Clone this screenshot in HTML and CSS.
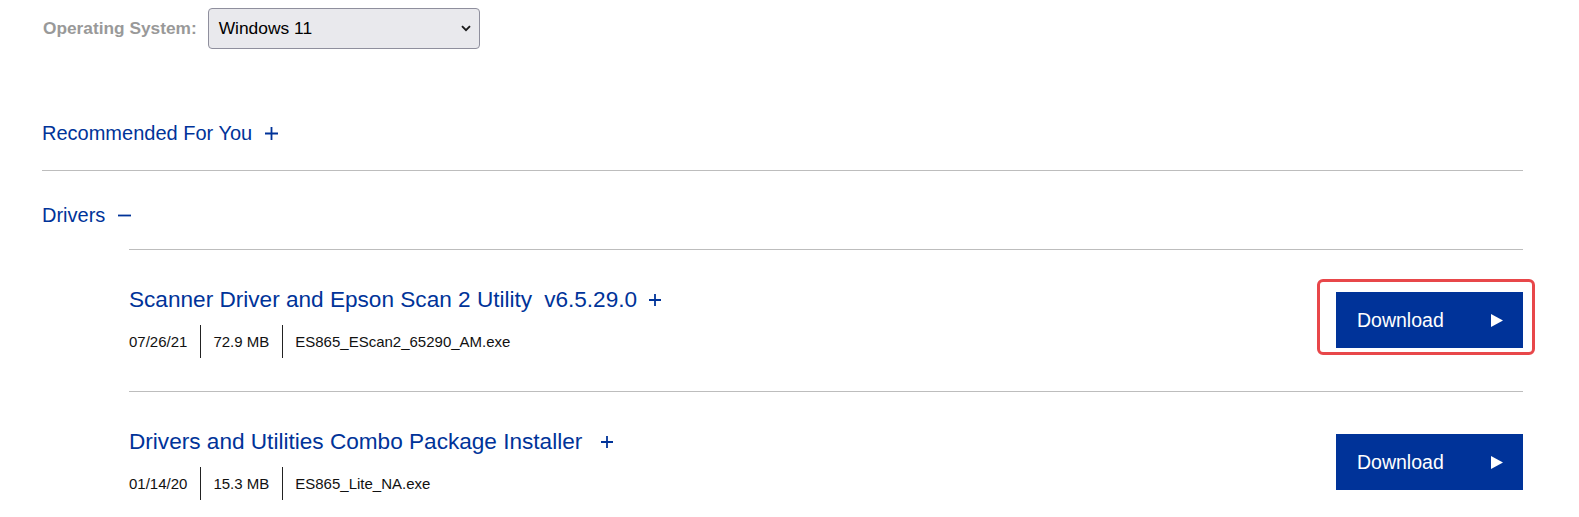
FILE: index.html
```html
<!DOCTYPE html>
<html lang="en">
<head>
<meta charset="utf-8">
<title>Drivers</title>
<link rel="stylesheet" href="styles.css">
</head>
<body>
<div class="page">
  <div class="os-row">
    <span class="os-label">Operating System:</span>
    <div class="select">
      <span>Windows 11</span>
      <svg class="chev" width="10" height="7" viewBox="0 0 10 7"><path d="M1 1.2 L5 5.2 L9 1.2" fill="none" stroke="#1a1a1a" stroke-width="1.9"/></svg>
    </div>
  </div>

  <section class="acc acc-first">
    <h2 class="acc-head">Recommended For You
      <svg class="acc-icon" width="13" height="13" viewBox="0 0 13 13"><path d="M0 6.5 H13 M6.5 0 V13" stroke="#003399" stroke-width="1.8"/></svg>
    </h2>
  </section>

  <section class="acc acc-open">
    <h2 class="acc-head">Drivers
      <svg class="acc-icon" width="13" height="13" viewBox="0 0 13 13"><path d="M0 6.5 H13" stroke="#003399" stroke-width="1.8"/></svg>
    </h2>
    <div class="list">
      <div class="row">
        <div class="info">
          <div class="title">
            <span>Scanner Driver and Epson Scan 2 Utility</span>
            <span class="ver">v6.5.29.0</span>
            <svg class="t-plus" width="12" height="12" viewBox="0 0 12 12"><path d="M0 6 H12 M6 0 V12" stroke="#003399" stroke-width="1.8"/></svg>
          </div>
          <div class="meta">
            <span>07/26/21</span>
            <span>72.9 MB</span>
            <span>ES865_EScan2_65290_AM.exe</span>
          </div>
        </div>
        <a class="btn highlighted" href="#">
          <span>Download</span>
          <svg width="12" height="13" viewBox="0 0 12 13"><path d="M0 0 L12 6.5 L0 13 Z" fill="#fff"/></svg>
        </a>
      </div>
      <div class="row">
        <div class="info">
          <div class="title">
            <span>Drivers and Utilities Combo Package Installer</span>
            <svg class="t-plus wide" width="12" height="12" viewBox="0 0 12 12"><path d="M0 6 H12 M6 0 V12" stroke="#003399" stroke-width="1.8"/></svg>
          </div>
          <div class="meta">
            <span>01/14/20</span>
            <span>15.3 MB</span>
            <span>ES865_Lite_NA.exe</span>
          </div>
        </div>
        <a class="btn" href="#">
          <span>Download</span>
          <svg width="12" height="13" viewBox="0 0 12 13"><path d="M0 0 L12 6.5 L0 13 Z" fill="#fff"/></svg>
        </a>
      </div>
    </div>
  </section>
</div>
</body>
</html>
```

FILE: styles.css
```css
* { box-sizing: border-box; }

body {
  margin: 0;
  background: #fff;
  font-family: "Liberation Sans", Arial, Helvetica, sans-serif;
  color: #111;
}

.page {
  padding: 8px 56px 0 42px;
}

.os-row {
  display: flex;
  align-items: center;
  gap: 11px;
  padding-left: 1px;
}

.os-label {
  font-size: 17.3px;
  font-weight: bold;
  color: #999999;
}

.select {
  width: 272px;
  height: 41px;
  border: 1px solid #8f8f9d;
  border-radius: 4px;
  background: #e9e9ed;
  display: flex;
  align-items: center;
  justify-content: space-between;
  padding: 0 8px 0 10px;
  font-size: 17.4px;
  color: #000;
}

.acc {
  padding-top: 32px;
}

.acc-first {
  margin-top: 40px;
  padding-bottom: 25px;
  border-bottom: 1px solid #bdbdbd;
}

.acc-head {
  margin: 0;
  font-size: 20px;
  font-weight: normal;
  line-height: 24px;
  color: #003399;
  display: flex;
  align-items: center;
  gap: 13px;
}

.list {
  margin-top: 22px;
  margin-left: 87px;
}

.row {
  border-top: 1px solid #bdbdbd;
  padding: 37px 0 33px;
  display: flex;
  justify-content: space-between;
  align-items: flex-start;
}

.title {
  display: flex;
  align-items: center;
  font-size: 22.6px;
  line-height: 26px;
  color: #003399;
}

.ver {
  margin-left: 12px;
}

.t-plus {
  margin-left: 12px;
}

.t-plus.wide {
  margin-left: 19px;
}

.meta {
  display: flex;
  margin-top: 12px;
  font-size: 15px;
  color: #111;
}

.meta span {
  height: 33px;
  line-height: 33px;
  padding: 0 12.5px;
  border-left: 1px solid #222;
}

.meta span:first-child {
  padding-left: 0;
  border-left: none;
}

.btn {
  position: relative;
  margin-top: 5px;
  width: 187px;
  height: 56px;
  background: #003399;
  color: #fff;
  text-decoration: none;
  font-size: 19.5px;
  display: flex;
  align-items: center;
  justify-content: space-between;
  padding: 0 20px 0 21px;
}

.btn.highlighted::after {
  content: "";
  position: absolute;
  left: -19px;
  top: -13px;
  right: -12px;
  bottom: -7px;
  border: 3px solid #e8474a;
  border-radius: 6px;
}
```
